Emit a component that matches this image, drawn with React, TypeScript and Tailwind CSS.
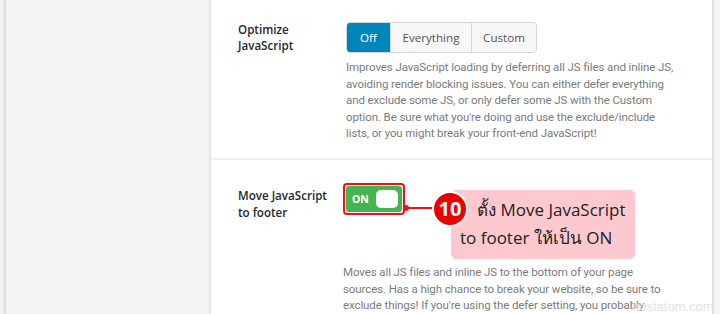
import React from "react";

const font = { fontFamily: 'Roboto, "Noto Sans", sans-serif' };
const labelFont = { fontFamily: '"Open Sans", "Noto Sans", sans-serif' };

export default function App() {
  return (
    <div
      className="relative flex w-[720px] h-[314px] overflow-hidden bg-white"
      style={font}
    >
      {/* left sidebar strip */}
      <div className="w-[4px] shrink-0 bg-[#f1f1f1]" />
      <div className="w-[2px] shrink-0 bg-[#dedede]" />
      <div className="w-[203px] shrink-0 bg-[#f4f4f4]" />
      <div className="w-[2px] shrink-0 bg-[#e5e5e5]" />

      {/* main content */}
      <div className="w-[501px] shrink-0 bg-white flex flex-col">
        {/* section 1 */}
        <div className="flex pl-[27px] pt-[22px] h-[167px] border-b-2 border-[#efefef]">
          <div
            className="w-[108px] shrink-0 text-[11.6px] leading-[16px] font-semibold text-[#23282d]"
            style={labelFont}
          >
            Optimize
            <br />
            JavaScript
          </div>
          <div className="flex flex-col">
            <div
              className="flex h-[31px] w-[191px] rounded-[4px] border border-[#d5d5d5] overflow-hidden text-[11.6px]"
              style={labelFont}
            >
              <div className="w-[43px] bg-[#0085ba] text-white flex items-center justify-center">
                Off
              </div>
              <div className="w-[81px] bg-[#f7f7f7] text-[#555] border-l border-[#d5d5d5] flex items-center justify-center">
                Everything
              </div>
              <div className="flex-1 bg-[#f7f7f7] text-[#555] border-l border-[#d5d5d5] flex items-center justify-center">
                Custom
              </div>
            </div>
            <div className="mt-[6px] text-[11.5px] tracking-[-0.1px] leading-[16.6px] text-[#7b7b7b] whitespace-nowrap">
              <div>Improves JavaScript loading by deferring all JS files and inline JS,</div>
              <div>avoiding render blocking issues. You can either defer everything</div>
              <div>and exclude some JS, or only defer some JS with the Custom</div>
              <div>option. Be sure what you're doing and use the exclude/include</div>
              <div>lists, or you might break your front-end JavaScript!</div>
            </div>
          </div>
        </div>

        {/* section 2 */}
        <div className="flex pl-[27px] pt-[23px]">
          <div
            className="w-[105px] shrink-0 pt-[4px] text-[11.6px] leading-[17px] font-semibold text-[#23282d]"
            style={labelFont}
          >
            Move JavaScript
            <br />
            to footer
          </div>
          <div className="flex flex-col">
            <div className="w-[62px] h-[32px] rounded-[4px] border-2 border-[#e8141c] p-[1px]">
              <div className="w-full h-full rounded-[3px] bg-[#46b450] flex items-center pl-[6px] pr-[4px]">
                <span
                  className="text-[10.5px] font-bold text-white leading-none"
                  style={labelFont}
                >
                  ON
                </span>
                <span className="ml-auto w-[22px] h-[18px] rounded-[5px] bg-white" />
              </div>
            </div>
            <div className="mt-[49px] text-[11.5px] tracking-[-0.1px] leading-[16.6px] text-[#7b7b7b] whitespace-nowrap">
              <div>Moves all JS files and inline JS to the bottom of your page</div>
              <div>sources. Has a high chance to break your website, so be sure to</div>
              <div>exclude things! If you're using the defer setting, you probably</div>
            </div>
          </div>
        </div>
      </div>

      <div className="w-[2px] shrink-0 bg-[#e2e2e2]" />
      <div className="flex-1 bg-[#f4f4f4]" />

      {/* annotation overlay */}
      <div
        className="absolute left-[451px] top-[190px] w-[184px] h-[69px] rounded-[5px] bg-[#fdc9ce] text-[#222] text-[17px] leading-[28px] pt-[6px]"
        style={labelFont}
      >
        <div className="pl-[26px] whitespace-nowrap">ตั้ง Move JavaScript</div>
        <div className="pl-[9px] whitespace-nowrap">to footer ให้เป็น ON</div>
      </div>
      <div className="absolute left-[403px] top-[205px] w-[6px] h-[6px] rounded-full bg-[#e8141c]" />
      <div className="absolute left-[406px] top-[207px] w-[28px] h-[2px] bg-[#e8141c]" />
      <div
        className="absolute left-[432px] top-[191px] w-[36px] h-[36px] rounded-full bg-[#ee0000] border-2 border-white flex items-center justify-center text-white font-bold text-[20px] leading-none"
        style={labelFont}
      >
        10
      </div>

      {/* watermark */}
      <div
        className="absolute left-[632px] top-[299px] text-[13px] leading-[15px] text-[#e2e2e2] whitespace-nowrap"
        style={{ fontFamily: '"Liberation Sans", sans-serif' }}
      >
        hostatom.com
      </div>
    </div>
  );
}
